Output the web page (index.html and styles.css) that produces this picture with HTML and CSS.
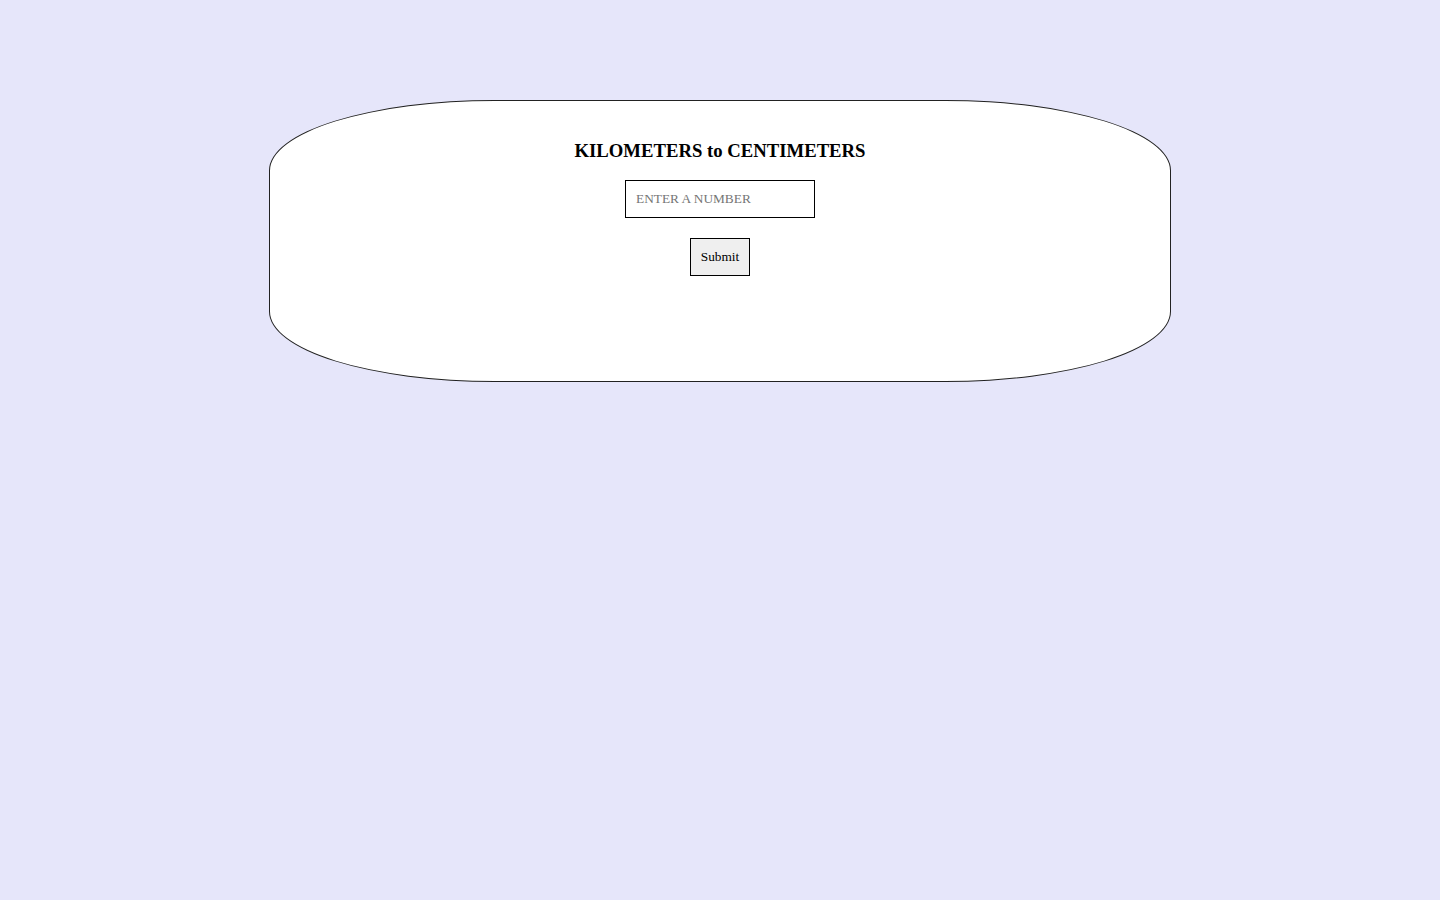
FILE: index.html
```html
<!DOCTYPE html>
<html>
<head>
<meta charset="utf-8">
<link rel="stylesheet" href="styles.css">
</head>
<body>
<div class="card">
  <h3 class="title">KILOMETERS to CENTIMETERS</h3>
  <form class="form">
    <input class="field" type="text" placeholder="ENTER A NUMBER">
    <button class="btn" type="button">Submit</button>
  </form>
</div>
</body>
</html>
```
FILE: styles.css
```css
html, body {
  margin: 0;
  padding: 0;
  background: #e6e6fa;
  font-family: "Liberation Serif", "Times New Roman", serif;
}
.card {
  box-sizing: border-box;
  width: 902px;
  height: 282px;
  margin: 100px auto 0;
  padding-top: 20px;
  background: #fff;
  border: 1px solid #222;
  border-radius: 25%;
  text-align: center;
}
.title {
  margin: 19px 0 18px;
  font-size: 18.72px;
  font-weight: bold;
  line-height: 22px;
  color: #000;
}
.form {
  margin: 0;
  display: flex;
  flex-direction: column;
  align-items: center;
  gap: 20px;
}
.field {
  box-sizing: border-box;
  width: 190px;
  height: 38px;
  padding: 0 10px;
  border: 1px solid #000;
  border-radius: 0;
  font-family: "Liberation Serif", "Times New Roman", serif;
  font-size: 13.33px;
  color: #000;
  background: #fff;
  outline: none;
}
.field::placeholder {
  color: #757575;
}
.btn {
  box-sizing: border-box;
  width: 60px;
  height: 38px;
  padding: 0;
  border: 1px solid #000;
  border-radius: 0;
  background: #efefef;
  font-family: "Liberation Serif", "Times New Roman", serif;
  font-size: 13.33px;
  color: #000;
}
```
